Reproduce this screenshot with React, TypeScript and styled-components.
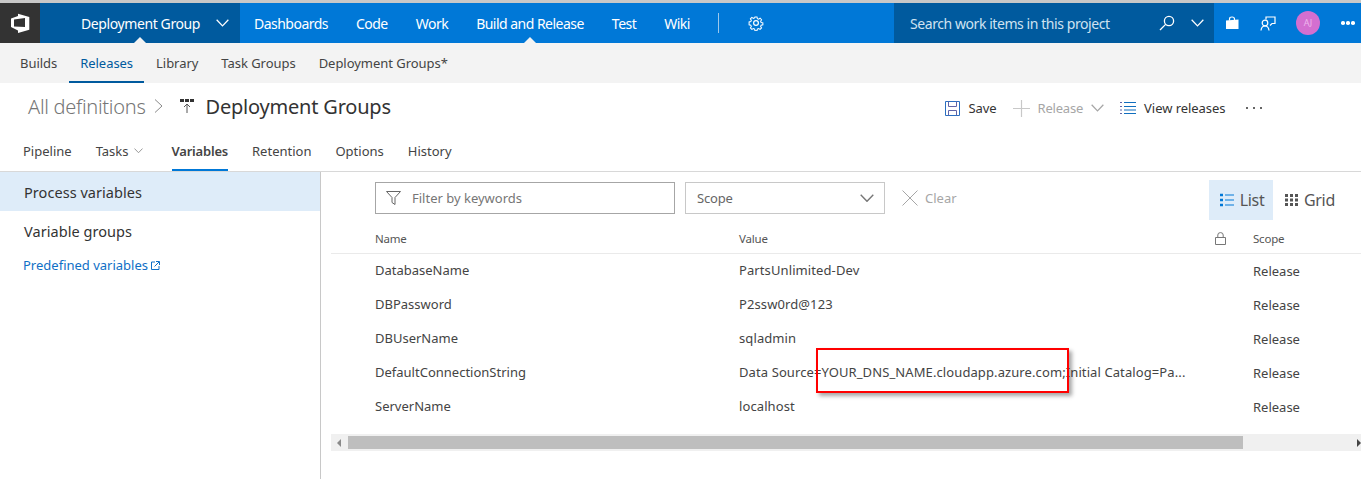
import React from 'react'
import styled, { createGlobalStyle } from 'styled-components'

const rows = [
  { name: 'DatabaseName', value: 'PartsUnlimited-Dev' },
  { name: 'DBPassword', value: 'P2ssw0rd@123' },
  { name: 'DBUserName', value: 'sqladmin' },
  { name: 'DefaultConnectionString', value: 'Data Source=YOUR_DNS_NAME.cloudapp.azure.com;Initial Catalog=Pa...' },
  { name: 'ServerName', value: 'localhost' }
]

function App () {
  return (
    <Page>
      <GlobalStyle />
      <TopLine />
      <Header>
        <Logo>
          <svg width="20" height="21" viewBox="0 0 20 21">
            <path fillRule="evenodd" fill="#fff" d="M1 5.500 L8 3 V.7 L19.300 4 V16.700 L8 20 V17.500 L1 14 Z M4 6.500 V13.500 L15 14 V5 Z" />
          </svg>
        </Logo>
        <ProjectBlock>
          <span>Deployment Group</span>
          <Chevron size={13} color="#fff" />
          <Notch $left={94} />
        </ProjectBlock>
        <HubNav>
          <HubLink>Dashboards</HubLink>
          <HubLink>Code</HubLink>
          <HubLink>Work</HubLink>
          <HubLink $active>Build and Release</HubLink>
          <HubLink>Test</HubLink>
          <HubLink>Wiki</HubLink>
          <HubDivider />
          <svg width="16" height="16" viewBox="0 0 16 16" fill="none" stroke="#fff" strokeWidth="1.2">
            <circle cx="8" cy="8" r="2.4" />
            <path d="M6.8 1h2.400l.4 2 1.400.6 1.800-1.100 1.700 1.700-1.100 1.800.6 1.400 2 .4v2.400l-2 .4-.6 1.400 1.100 1.800-1.700 1.700-1.800-1.100-1.400.6-.4 2H6.800l-.4-2-1.400-.6-1.800 1.100-1.700-1.700 1.100-1.800-.6-1.400-2-.4V6.800l2-.4.6-1.400-1.100-1.800 1.700-1.700 1.800 1.100 1.400-.6z" transform="translate(1.100 1.100) scale(.86)" />
          </svg>
        </HubNav>
        <SearchBlock>
          <SearchText>Search work items in this project</SearchText>
          <svg width="16" height="16" viewBox="0 0 16 16" fill="none" stroke="#fff" strokeWidth="1.3">
            <circle cx="10" cy="6" r="4.6" />
            <path d="M6.600 9.400 L1 15" />
          </svg>
          <Chevron size={13} color="#fff" />
        </SearchBlock>
        <HeaderIcons>
          <svg width="14" height="14" viewBox="0 0 14 14" fill="#fff">
            <path d="M1 4.500 L13.500 3.500 V13 H1 Z" />
            <path d="M4.500 4.500 V3 Q4.500 1 7 1 Q9.500 1 9.500 3 V4.500" fill="none" stroke="#fff" strokeWidth="1.2" />
          </svg>
          <svg width="16" height="15" viewBox="0 0 16 15" fill="none" stroke="#fff" strokeWidth="1.2">
            <path d="M6 3.500 V1 H15 V7.500 H12 L10 9.500" />
            <circle cx="5" cy="7" r="2.800" />
            <path d="M1 14.500 Q1.500 10 5 10 Q8.500 10 9 14.500" />
          </svg>
          <Avatar>AJ</Avatar>
          <HeaderDots>
            <i /><i /><i />
          </HeaderDots>
        </HeaderIcons>
      </Header>

      <SubNav>
        <SubLink>Builds</SubLink>
        <SubLink $active>Releases</SubLink>
        <SubLink>Library</SubLink>
        <SubLink>Task Groups</SubLink>
        <SubLink>Deployment Groups*</SubLink>
      </SubNav>

      <TitleRow>
        <Crumb>All definitions</Crumb>
        <svg width="9" height="16" viewBox="0 0 9 16" fill="none" stroke="#8a8a8a" strokeWidth="1">
          <path d="M1 1.500 L8 8 L1 14.500" />
        </svg>
        <PipelineIcon width="16" height="16" viewBox="0 0 16 16">
          <path d="M1 1h4v3H1zM6 1h4v3H6zM11 1h4v3h-4z" fill="#333" />
          <path d="M8 15V6M5 9l3-3 3 3" fill="none" stroke="#555" strokeWidth="1" />
        </PipelineIcon>
        <PageTitle>Deployment Groups</PageTitle>
        <Toolbar>
          <ToolButton>
            <svg width="15" height="15" viewBox="0 0 15 15" fill="none" stroke="#2b6fc0" strokeWidth="1">
              <path d="M.5.5h14v14H.5z" />
              <path d="M3.500.5v5h8v-5M3.500 14.500v-5h8v5" stroke="#6264a7" />
            </svg>
            Save
          </ToolButton>
          <ToolButton $disabled>
            <svg width="17" height="17" viewBox="0 0 17 17" stroke="#c8c8c8" strokeWidth="1.2">
              <path d="M0 8.500h17M8.500 0v17" />
            </svg>
            <span>Release</span>
            <Chevron size={13} color="#a6a6a6" />
          </ToolButton>
          <ToolButton>
            <svg width="16" height="12" viewBox="0 0 16 12" strokeWidth="1">
              <path d="M0 .5h2M0 4.500h2M0 8h2M0 11.500h2" stroke="#6264a7" />
              <path d="M4 .5h12M4 4.500h12M4 8h12M4 11.500h12" stroke="#106ebe" />
            </svg>
            View releases
          </ToolButton>
          <MoreDots>
            <i /><i /><i />
          </MoreDots>
        </Toolbar>
      </TitleRow>

      <Tabs>
        <Tab>Pipeline</Tab>
        <Tab $menu>
          Tasks
          <Chevron size={9} color="#8a8a8a" />
        </Tab>
        <Tab $active>Variables</Tab>
        <Tab>Retention</Tab>
        <Tab>Options</Tab>
        <Tab>History</Tab>
      </Tabs>

      <Body>
        <Sidebar>
          <SideItem $active>Process variables</SideItem>
          <SideItem>Variable groups</SideItem>
          <SideLink>
            Predefined variables
            <svg width="9" height="9" viewBox="0 0 9 9" fill="none" stroke="#0f6fc6" strokeWidth="1">
              <path d="M4 1H.5v7.500H8V5M3.500 5.500 8 1M5 .5h3.500V4" />
            </svg>
          </SideLink>
        </Sidebar>
        <Main>
          <FilterBar>
            <FilterBox>
              <svg width="15" height="14" viewBox="0 0 15 14" fill="none" stroke="#666" strokeWidth="1">
                <path d="M.5.5h14L9 6.500V13.500L6 11.500V6.500Z" />
              </svg>
              Filter by keywords
            </FilterBox>
            <ScopeBox>
              Scope
              <Chevron size={14} color="#767676" />
            </ScopeBox>
            <ClearButton>
              <svg width="16" height="16" viewBox="0 0 16 16" stroke="#a6a6a6" strokeWidth="1">
                <path d="M.5.5l15 15M15.500.5l-15 15" />
              </svg>
              Clear
            </ClearButton>
            <ViewSwitch>
              <ViewButton $active>
                <svg width="14" height="14" viewBox="0 0 14 14" stroke="#0078d7">
                  <path d="M0 2h3M0 7h3M0 12h3" strokeWidth="2.4" />
                  <path d="M5 2h9M5 7h9M5 12h9" strokeWidth="1" />
                </svg>
                List
              </ViewButton>
              <ViewButton>
                <svg width="13" height="12" viewBox="0 0 13 12" fill="#555">
                  <path d="M0 0h3v3H0zM5 0h3v3H5zM10 0h3v3h-3zM0 4.500h3v3H0zM5 4.500h3v3H5zM10 4.500h3v3h-3zM0 9h3v3H0zM5 9h3v3H5zM10 9h3v3h-3z" />
                </svg>
                Grid
              </ViewButton>
            </ViewSwitch>
          </FilterBar>

          <HeadRow>
            <span>Name</span>
            <span>Value</span>
            <svg width="11" height="13" viewBox="0 0 11 13" fill="none" stroke="#777" strokeWidth="1">
              <path d="M.5 5.500h10v7H.5zM2.800 5.500V3Q2.800.6 5.500.6T8.200 3v2.500" />
            </svg>
            <span>Scope</span>
          </HeadRow>
          {rows.map(row => (
            <Row key={row.name}>
              <span>{row.name}</span>
              <ValueCell>{row.value}</ValueCell>
              <span />
              <ScopeCell>Release</ScopeCell>
            </Row>
          ))}

          <ScrollBar>
            <ScrollArrow $dir="left" />
            <ScrollThumb />
            <ScrollArrow $dir="right" />
          </ScrollBar>
          <RedBox />
        </Main>
      </Body>
    </Page>
  )
}

function Chevron ({ size, color }: { size: number, color: string }) {
  return (
    <svg width={size} height={size * 0.6} viewBox="0 0 13 8" fill="none" stroke={color} strokeWidth={1.3} style={{ flexShrink: 0 }}>
      <path d="M.5.8 6.500 7 12.500.8" />
    </svg>
  )
}

const GlobalStyle = createGlobalStyle`
  html, body {
    margin: 0;
    padding: 0;
    background: #fff;
  }
  body {
    font-family: "Noto Sans", "Open Sans", sans-serif;
    font-size: 13px;
    color: #333;
  }
`
const Page = styled.div`
  width: 1361px;
  height: 479px;
  overflow: hidden;
`
const TopLine = styled.div`
  height: 3px;
  background: #c8c8c8;
`
const Header = styled.header`
  display: flex;
  height: 40px;
  background: #0078d7;
  color: #fff;
  font-size: 14px;
  letter-spacing: -0.4px;
`
const Logo = styled.div`
  width: 40px;
  background: #333;
  display: flex;
  align-items: center;
  justify-content: center;
`
const ProjectBlock = styled.div`
  position: relative;
  width: 200px;
  box-sizing: border-box;
  padding: 0 11px 0 41px;
  background: #005a9e;
  display: flex;
  align-items: center;
  justify-content: space-between;
`
const Notch = styled.i<{ $left: number }>`
  position: absolute;
  bottom: 0;
  left: ${p => p.$left}px;
  border: 6px solid transparent;
  border-top: 0;
  border-bottom-color: #f3f3f3;
`
const HubNav = styled.nav`
  display: flex;
  align-items: center;
  width: 654px;
  padding-left: 14px;
  box-sizing: border-box;
  svg {
    margin-left: 29px;
  }
`
const HubLink = styled.a<{ $active?: boolean }>`
  position: relative;
  height: 40px;
  line-height: 42px;
  margin-right: 28px;
  letter-spacing: -0.52px;
  &::after {
    content: '';
    display: ${p => (p.$active ? 'block' : 'none')};
    position: absolute;
    bottom: 0;
    left: 50%;
    margin-left: -6px;
    border: 6px solid transparent;
    border-top: 0;
    border-bottom-color: #f3f3f3;
  }
`
const HubDivider = styled.i`
  width: 1px;
  height: 20px;
  background: #9cc8ec;
`
const SearchBlock = styled.div`
  width: 320px;
  box-sizing: border-box;
  background: #005a9e;
  display: flex;
  align-items: center;
  padding: 0 10px 0 16px;
  gap: 16px;
`
const SearchText = styled.span`
  flex: 1;
  color: #cfe2f1;
  letter-spacing: -0.43px;
`
const HeaderIcons = styled.div`
  flex: 1;
  display: flex;
  align-items: center;
  padding-left: 11px;
  gap: 21px;
`
const Avatar = styled.div`
  width: 24px;
  height: 24px;
  margin-left: -1px;
  border-radius: 50%;
  background: #d36fd0;
  color: #eeb7ec;
  font-size: 9px;
  letter-spacing: 0;
  text-align: center;
  line-height: 24px;
`
const HeaderDots = styled.div`
  display: flex;
  gap: 1.500px;
  i {
    width: 3.500px;
    height: 3.500px;
    border-radius: 50%;
    background: #fff;
  }
`
const SubNav = styled.nav`
  height: 40px;
  background: #f3f3f3;
  display: flex;
  padding-left: 9px;
  gap: 1px;
  letter-spacing: -0.04px;
`
const SubLink = styled.a<{ $active?: boolean }>`
  padding: 0 11px;
  line-height: 41px;
  height: 38px;
  color: ${p => (p.$active ? '#005a9e' : '#444')};
  border-bottom: 2px solid ${p => (p.$active ? '#005a9e' : 'transparent')};
`
const TitleRow = styled.div`
  height: 46px;
  display: flex;
  align-items: center;
  padding: 0 99px 2px 28px;
`
const Crumb = styled.span`
  font-size: 20px;
  font-weight: 300;
  color: #767676;
  letter-spacing: -0.28px;
  margin-right: 9px;
`
const PipelineIcon = styled.svg`
  margin: 0 10px 0 16px;
`
const PageTitle = styled.h1`
  margin: 0;
  font-size: 20px;
  font-weight: 400;
  color: #333;
  letter-spacing: -0.2px;
`
const Toolbar = styled.div`
  margin-left: auto;
  padding-top: 4px;
  display: flex;
  align-items: center;
  gap: 16px;
`
const ToolButton = styled.button<{ $disabled?: boolean }>`
  display: flex;
  align-items: center;
  gap: 8px;
  padding: 0;
  border: 0;
  background: none;
  font: inherit;
  letter-spacing: ${p => (p.$disabled ? -0.2 : -0.05)}px;
  color: ${p => (p.$disabled ? '#a6a6a6' : '#333')};
`
const MoreDots = styled.div`
  display: flex;
  gap: 4.500px;
  margin-left: 4px;
  i {
    width: 2.500px;
    height: 2.500px;
    border-radius: 50%;
    background: #333;
  }
`
const Tabs = styled.nav`
  height: 40px;
  display: flex;
  padding-left: 23px;
  gap: 24px;
  border-bottom: 1px solid #d8d8d8;
`
const Tab = styled.a<{ $active?: boolean, $menu?: boolean }>`
  display: flex;
  align-items: center;
  gap: 5px;
  height: 36px;
  padding-top: 2px;
  margin-right: ${p => (p.$menu ? 5 : 0)}px;
  color: #444;
  font-weight: ${p => (p.$active ? 600 : 400)};
  letter-spacing: ${p => (p.$active ? -0.2 : 0)}px;
  border-bottom: 2px solid ${p => (p.$active ? '#0078d7' : 'transparent')};
`
const Body = styled.div`
  display: flex;
  height: 307px;
`
const Sidebar = styled.aside`
  width: 320px;
  flex-shrink: 0;
  border-right: 1px solid #c8c8c8;
`
const SideItem = styled.div<{ $active?: boolean }>`
  height: 39px;
  line-height: 41px;
  padding-left: 24px;
  font-size: 14.500px;
  letter-spacing: 0.05px;
  background: ${p => (p.$active ? '#deecf9' : 'transparent')};
`
const SideLink = styled.a`
  display: flex;
  align-items: center;
  gap: 3px;
  padding: 6px 0 0 23px;
  color: #0f6fc6;
`
const Main = styled.main`
  position: relative;
  flex: 1;
  padding-left: 10px;
`
const FilterBar = styled.div`
  height: 48px;
  display: flex;
  align-items: flex-start;
  padding: 8px 17px 0 44px;
`
const FilterBox = styled.div`
  width: 300px;
  height: 32px;
  margin-top: 2px;
  box-sizing: border-box;
  border: 1px solid #a6a6a6;
  display: flex;
  align-items: center;
  padding-left: 10px;
  gap: 11px;
  color: #767676;
`
const ScopeBox = styled.div`
  width: 200px;
  height: 32px;
  margin: 2px 0 0 10px;
  box-sizing: border-box;
  border: 1px solid #c8c8c8;
  display: flex;
  align-items: center;
  justify-content: space-between;
  padding: 0 10px 0 11px;
  color: #666;
  letter-spacing: -0.2px;
`
const ClearButton = styled.div`
  display: flex;
  align-items: center;
  height: 32px;
  margin: 2px 0 0 17px;
  gap: 7px;
  color: #a6a6a6;
`
const ViewSwitch = styled.div`
  margin-left: auto;
  display: flex;
  gap: 1px;
`
const ViewButton = styled.div<{ $active?: boolean }>`
  height: 40px;
  display: flex;
  align-items: center;
  gap: 5.500px;
  padding: 0 9px 0 11px;
  font-size: 16px;
  color: #555;
  letter-spacing: -0.3px;
  background: ${p => (p.$active ? '#deecf9' : 'transparent')};
`
const HeadRow = styled.div`
  display: grid;
  grid-template-columns: 364px 476px 38px 1fr;
  align-items: center;
  height: 21px;
  padding: 0 0 4px 44px;
  font-size: 11.500px;
  letter-spacing: -0.2px;
  border-bottom: 1px solid #eaeaea;
  color: #555;
`
const Row = styled.div`
  display: grid;
  grid-template-columns: 364px 448px 66px 1fr;
  align-items: center;
  box-sizing: border-box;
  height: 34px;
  padding: 0 0 2px 44px;
  color: #444;
`
const ValueCell = styled.span`
  white-space: nowrap;
  letter-spacing: 0.1px;
`
const ScopeCell = styled.span`
  padding-top: 2px;
`
const ScrollBar = styled.div`
  height: 17px;
  margin-top: 10px;
  background: #f0f0f0;
  display: flex;
  align-items: center;
`
const ScrollArrow = styled.i<{ $dir: 'left' | 'right' }>`
  border: 4px solid transparent;
  ${p => (p.$dir === 'left'
    ? 'border-right-color: #8a8a8a; border-left-width: 0; margin: 0 7px 0 6px;'
    : 'border-left-color: #444; border-right-width: 0; margin-left: auto;')}
`
const ScrollThumb = styled.div`
  width: 895px;
  height: 13px;
  margin-top: 2px;
  align-self: flex-start;
  background: #bebebe;
`
const RedBox = styled.div`
  position: absolute;
  left: 495px;
  top: 176px;
  width: 249px;
  height: 41px;
  border: 2px solid #f00;
  box-shadow: 3px 3px 4px rgba(0, 0, 0, 0.35);
`
export default App
